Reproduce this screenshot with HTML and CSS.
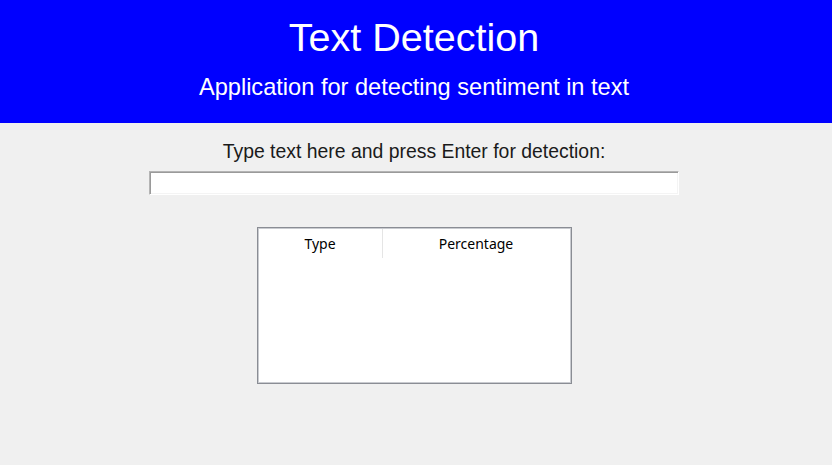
FILE: index.html
```html
<!DOCTYPE html>
<html>
<head>
<meta charset="utf-8">
<link rel="stylesheet" href="styles.css">
</head>
<body>
<header class="banner">
  <div class="banner-inner">
    <h1 class="title">Text Detection</h1>
    <p class="subtitle">Application for detecting sentiment in text</p>
  </div>
</header>
<main class="content">
  <label class="prompt" for="entry">Type text here and press Enter for detection:</label>
  <input id="entry" class="entry" type="text">
  <div class="tree">
    <div class="tree-head">
      <div class="col col-type">Type</div>
      <div class="col col-pct">Percentage</div>
    </div>
    <div class="tree-body"></div>
  </div>
</main>
</body>
</html>
```
FILE: styles.css
```css
html, body {
  margin: 0;
  padding: 0;
}
body {
  background: #f0f0f0;
  width: 832px;
  height: 465px;
  overflow: hidden;
  font-family: "Liberation Sans", Arial, sans-serif;
}
.banner {
  background: #0000ff;
  height: 123px;
  color: #ffffff;
}
.banner-inner {
  width: 828px;
  display: flex;
  flex-direction: column;
  align-items: center;
  padding-top: 15px;
}
.title {
  margin: 0;
  font-weight: normal;
  font-size: 39.5px;
  line-height: 45px;
}
.subtitle {
  margin: 13px 0 0 0;
  font-size: 23.6px;
  line-height: 28px;
}
.content {
  width: 828px;
  display: flex;
  flex-direction: column;
  align-items: center;
}
.prompt {
  margin-top: 17px;
  font-size: 19.4px;
  line-height: 22px;
  color: #1a1a1a;
}
.entry {
  margin: 9px 0 0 0;
  box-sizing: border-box;
  width: 530px;
  height: 24px;
  padding: 0;
  background: #ffffff;
  border-style: solid;
  border-width: 1px;
  border-color: #b4b4b4 #ffffff #ffffff #b4b4b4;
  box-shadow: inset 1px 1px 0 #9a9a9a, inset -1px -1px 0 #f4f4f4;
  outline: none;
}
.tree {
  margin-top: 32px;
  box-sizing: border-box;
  width: 315px;
  height: 157px;
  background: #ffffff;
  border: 1px solid #8a8d94;
  box-shadow: inset 1px 1px 0 #c9cbd0, inset -1px -1px 0 #c9cbd0;
  padding: 1px;
  display: flex;
  flex-direction: column;
}
.tree-head {
  display: flex;
  height: 29px;
  font-family: "Noto Sans", "Open Sans", sans-serif;
  font-size: 14px;
  color: #000000;
}
.col {
  display: flex;
  align-items: center;
  justify-content: center;
}
.col-type {
  width: 123px;
  border-right: 1px solid #e5e5e5;
}
.col-pct {
  flex: 1;
}
.tree-body {
  flex: 1;
}
```
